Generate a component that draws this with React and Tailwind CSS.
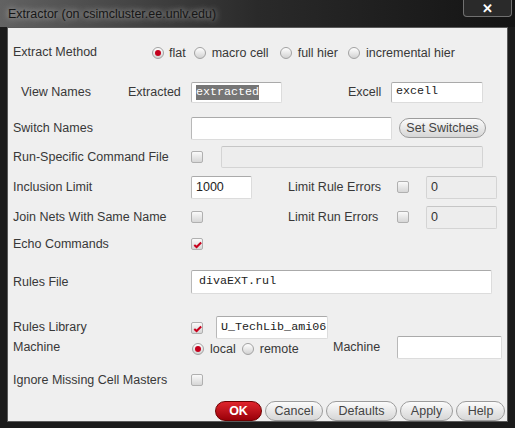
import React from "react";

const label = "text-[12.5px] text-[#383838]";
const mono = "font-['Liberation_Mono',monospace] text-[11.7px] text-[#222]";

function Radio({ on }) {
  return (
    <span className="flex h-[12px] w-[12px] shrink-0 items-center justify-center rounded-full border border-[#a2a2a2] bg-linear-to-b from-[#ffffff] to-[#d2d2d2]">
      {on && <span className="h-[6px] w-[6px] rounded-full bg-[#c4001c]" />}
    </span>
  );
}

function Check({ on }) {
  return (
    <span className="relative flex h-[12px] w-[12px] shrink-0 items-center justify-center rounded-[2px] border border-[#b0b0b0] bg-linear-to-b from-[#fafafa] to-[#d6d6d6]">
      {on && (
        <svg viewBox="0 0 12 12" className="absolute left-[0px] top-[0px] h-[11px] w-[11px]">
          <path d="M2.5 6.5 L5 8.8 L10 3.8" fill="none" stroke="#c8001c" strokeWidth="2.2" />
        </svg>
      )}
    </span>
  );
}

function Field({ w, h = "h-[22px]", children, disabled }) {
  return (
    <div
      className={[
        "flex shrink-0 items-center rounded-[2px] border pl-[4px]",
        w,
        h,
        disabled
          ? "border-[#d4d4d4] border-t-[#c6c6c6] bg-[#ededed]"
          : "border-[#dcdcdc] border-t-[#aaaaaa] border-l-[#b8b8b8] bg-white",
      ].join(" ")}
    >
      {children}
    </div>
  );
}

function Btn({ w, children, primary }) {
  return (
    <button
      type="button"
      className={[
        "flex h-[20px] items-center justify-center rounded-full border text-[12.5px]",
        w,
        primary
          ? "border-[#6e0000] bg-linear-to-b from-[#e0242c] to-[#9a0008] font-bold text-white"
          : "border-[#9c9c9c] bg-linear-to-b from-[#fbfbfb] to-[#d6d6d6] text-[#444]",
      ].join(" ")}
    >
      {children}
    </button>
  );
}

function Row({ mt, h = "h-[24px]", children, className = "" }) {
  return <div className={["flex items-center", mt, h, className].join(" ")}>{children}</div>;
}

function Label({ children, w = "w-[178px]" }) {
  return <span className={[label, w, "shrink-0 whitespace-nowrap"].join(" ")}>{children}</span>;
}

export default function App() {
  return (
    <div className="flex h-[428px] w-[515px] flex-col overflow-hidden bg-[#1b1b1b] font-['Liberation_Sans',Arial,sans-serif]">
      {/* title bar */}
      <div className="flex h-[27px] shrink-0 items-start bg-linear-to-r from-[#626262] via-[#2a2a2a] to-[#141414]">
        <span className="ml-[8px] mt-[5px] text-[12.5px] text-[#161616] [text-shadow:0_0_6px_rgba(230,230,230,0.9)]">
          Extractor (on csimcluster.ee.unlv.edu)
        </span>
        <div className="ml-auto mr-[3px] flex h-[17px] w-[49px] items-center justify-center rounded-b-[4px] border border-t-0 border-[#707070] bg-[#2a2a2a]">
          <span className="text-[13px] font-bold leading-none text-white">✕</span>
        </div>
      </div>

      {/* content */}
      <div className="mx-[7px] flex h-[395px] flex-col border border-[#5a5a5a] bg-[#efefef] pl-[5px]">
        <Row mt="mt-[12px]">
          <Label w="w-[139px]">Extract Method</Label>
          <div className="flex items-center pt-[2px] text-[12.5px] text-[#383838]">
            <Radio on />
            <span className="ml-[5px] mr-[8px]">flat</span>
            <Radio />
            <span className="ml-[6px] mr-[11px]">macro cell</span>
            <Radio />
            <span className="ml-[6px] mr-[10px]">full hier</span>
            <Radio />
            <span className="ml-[6px]">incremental hier</span>
          </div>
        </Row>

        <Row mt="mt-[16px]">
          <Label w="w-[115px] pl-[8px]">View Names</Label>
          <Label w="w-[63px]">Extracted</Label>
          <Field w="w-[91px]" h="h-[21px]">
            <span className={mono + " bg-[#767676] text-white leading-[15px]"}>extracted</span>
          </Field>
          <Label w="w-[43px] ml-[66px]">Excell</Label>
          <Field w="w-[92px]" h="h-[21px]">
            <span className={mono}>excell</span>
          </Field>
        </Row>

        <Row mt="mt-[12px]">
          <Label>Switch Names</Label>
          <Field w="w-[201px]" h="h-[23px]" />
          <div className="ml-[7px]">
            <Btn w="w-[87px]">Set Switches</Btn>
          </div>
        </Row>

        <Row mt="mt-[5px]">
          <Label>Run-Specific Command File</Label>
          <Check />
          <div className="ml-[18px]">
            <Field w="w-[262px]" disabled />
          </div>
        </Row>

        <Row mt="mt-[6px]">
          <Label>Inclusion Limit</Label>
          <div className="w-[97px]">
            <Field w="w-[61px]" h="h-[23px]">
              <span className="text-[12.5px] text-[#222]">1000</span>
            </Field>
          </div>
          <Label w="w-[109px]">Limit Rule Errors</Label>
          <Check />
          <div className="ml-[17px]">
            <Field w="w-[71px]" h="h-[23px]" disabled>
              <span className="text-[12.5px] text-[#333]">0</span>
            </Field>
          </div>
        </Row>

        <Row mt="mt-[6px]">
          <Label>Join Nets With Same Name</Label>
          <div className="w-[97px]">
            <Check />
          </div>
          <Label w="w-[109px]">Limit Run Errors</Label>
          <Check />
          <div className="ml-[17px]">
            <Field w="w-[71px]" h="h-[23px]" disabled>
              <span className="text-[12.5px] text-[#333]">0</span>
            </Field>
          </div>
        </Row>

        <Row mt="mt-[3px]">
          <Label>Echo Commands</Label>
          <Check on />
        </Row>

        <Row mt="mt-[14px]">
          <Label>Rules File</Label>
          <Field w="w-[301px]" h="h-[24px]">
            <span className={mono + " pl-[3px]"}>divaEXT.rul</span>
          </Field>
        </Row>

        <Row mt="mt-[22px]" h="h-[23px]">
          <Label>Rules Library</Label>
          <Check on />
          <div className="ml-[13px]">
            <Field w="w-[112px]" h="h-[23px]">
              <span className={mono}>U_TechLib_ami06</span>
            </Field>
          </div>
        </Row>

        <Row mt="-mt-[3px]" h="h-[23px]">
          <Label>Machine</Label>
          <div className="flex w-[142px] items-center pt-[3px] text-[12.5px] text-[#383838]">
            <span className="ml-[1px]"><Radio on /></span>
            <span className="ml-[6px] mr-[6px]">local</span>
            <Radio />
            <span className="ml-[6px]">remote</span>
          </div>
          <Label w="w-[64px]">Machine</Label>
          <Field w="w-[105px]" h="h-[23px]" />
        </Row>

        <Row mt="mt-[9px]">
          <Label>Ignore Missing Cell Masters</Label>
          <Check />
        </Row>

        <div className="mt-[9px] flex h-[20px] justify-end gap-[3px] pr-[2px]">
          <Btn w="w-[47px]" primary>OK</Btn>
          <Btn w="w-[58px]">Cancel</Btn>
          <Btn w="w-[71px]">Defaults</Btn>
          <Btn w="w-[53px]">Apply</Btn>
          <Btn w="w-[49px]">Help</Btn>
        </div>
      </div>
    </div>
  );
}
